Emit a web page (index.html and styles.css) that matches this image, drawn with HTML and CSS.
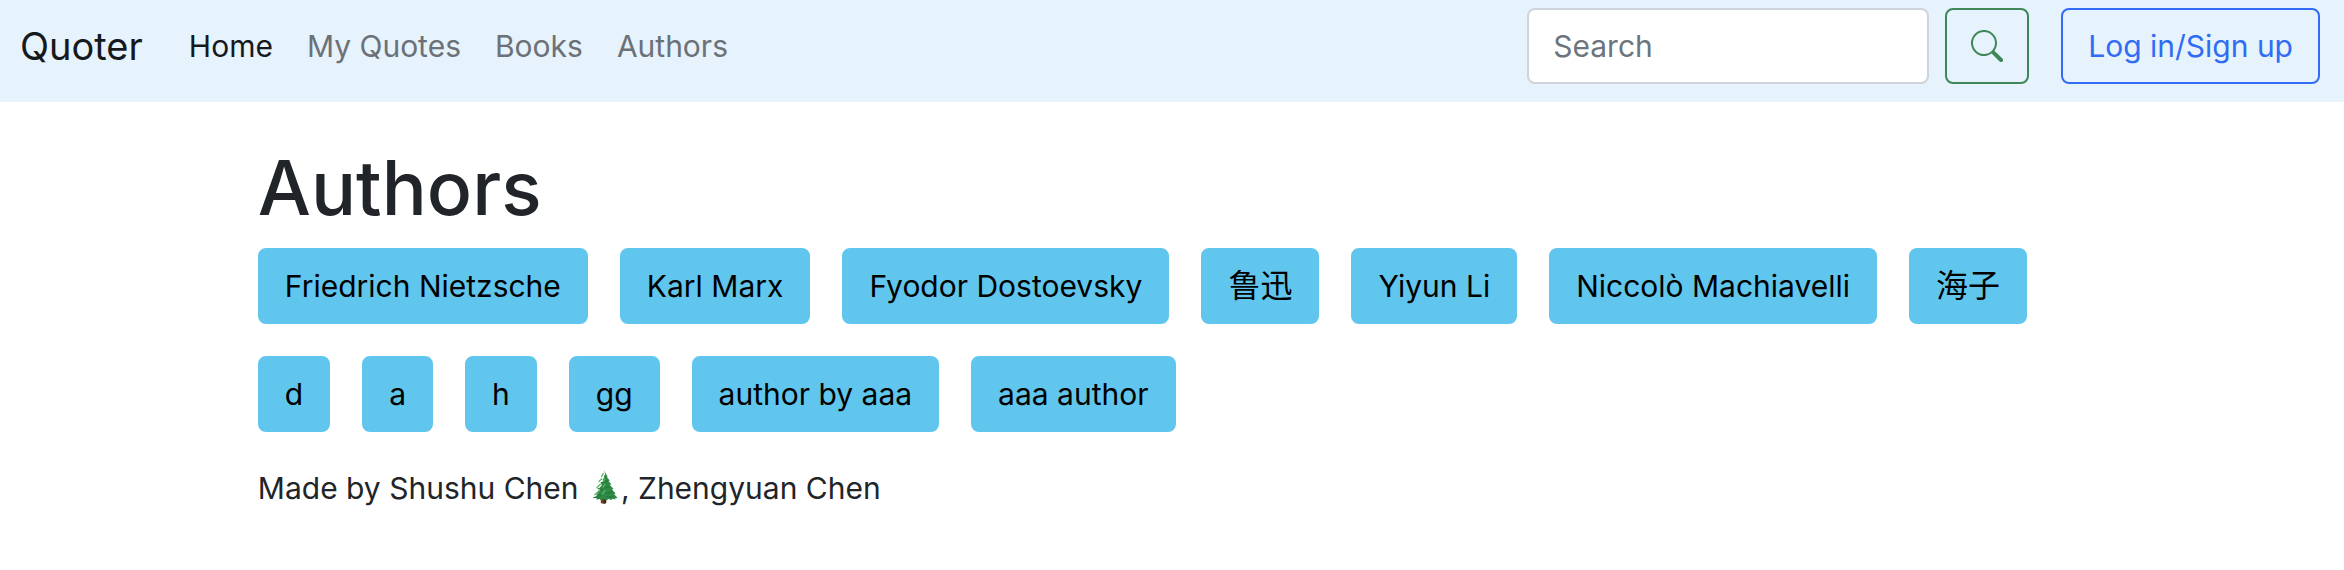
FILE: index.html
```html
<!DOCTYPE html>
<html lang="en">
<head>
<meta charset="utf-8">
<title>Quoter - Authors</title>
<link rel="stylesheet" href="styles.css">
</head>
<body>
<nav class="navbar">
  <a class="brand" href="#">Quoter</a>
  <ul class="nav-links">
    <li><a class="active" href="#">Home</a></li>
    <li><a href="#">My Quotes</a></li>
    <li><a href="#">Books</a></li>
    <li><a href="#">Authors</a></li>
  </ul>
  <form class="search">
    <input class="search-input" type="search" placeholder="Search" aria-label="Search">
    <button class="btn search-btn" type="submit" aria-label="Submit search">
      <svg class="icon" viewBox="0 0 16 16" fill="currentColor" aria-hidden="true"><path d="M11.742 10.344a6.500 6.500 0 1 0-1.397 1.398h-.001c.03.04.062.078.098.115l3.850 3.850a1 1 0 0 0 1.415-1.414l-3.850-3.850a1.007 1.007 0 0 0-.115-.1zM12 6.500a5.500 5.500 0 1 1-11 0 5.500 5.500 0 0 1 11 0z"/></svg>
    </button>
  </form>
  <a class="btn login" href="#">Log in/Sign up</a>
</nav>
<main class="page">
  <h1 class="title">Authors</h1>
  <div class="authors">
    <a class="btn author" href="#">Friedrich Nietzsche</a>
    <a class="btn author" href="#">Karl Marx</a>
    <a class="btn author" href="#">Fyodor Dostoevsky</a>
    <a class="btn author author-zh" href="#" lang="zh">鲁迅</a>
    <a class="btn author" href="#">Yiyun Li</a>
    <a class="btn author" href="#">Niccolò Machiavelli</a>
    <a class="btn author author-zh" href="#" lang="zh">海子</a>
    <a class="btn author" href="#">d</a>
    <a class="btn author" href="#">a</a>
    <a class="btn author" href="#">h</a>
    <a class="btn author" href="#">gg</a>
    <a class="btn author" href="#">author by aaa</a>
    <a class="btn author" href="#">aaa author</a>
  </div>
  <footer class="footer">Made by Shushu Chen <svg class="tree" viewBox="0 0 32 32" role="img" aria-label="evergreen tree"><path fill="#6b3f1d" d="M13 25h5v6q-2.500 1.500-5 0z"/><path fill="#3b210f" d="M16 25h2v6l-2 .8z"/><path fill="#2f8a45" d="M16 0l2 4 1.500 2-1 .3 2.500 3.200-1.200.5 3.200 3.500-1.500.5 3.500 3.800-1.500.6 3.500 3.600-1.500.6 3.500 4-2.500-.2.500 1.400-3-.8-.8 1.300-2.700-1.100-2.500 1.500-2.200-1.500-2.800 1.300-1-1.300-3 .9.400-1.500-2.700-.3 4-4-1.800-.5 3.700-3.700-1.600-.5 3.300-3.800-1.500-.4 2.800-3.500-1.200-.4 2.300-3.200-1-.3 1.500-2z"/><path fill="none" stroke="#56b865" stroke-width="1.200" d="M15.500 3l-2 3.500M14 8l-3 3M17 8l-2 3M13 13l-4 4M17 13l-2 3.500M12 19l-5 4.500M17 19l-3 4.500"/><path fill="none" stroke="#27753c" stroke-width="1" d="M16.500 6l2 1M17 11l4-1M13 11.500l3 .8M17 17l5-1.500M10 17.500l5 1M18 22l6-1.500M9 23l6 1M18 25.500l7-.5M6 26l6-.5"/></svg>, Zhengyuan Chen</footer>
</main>
</body>
</html>
```
FILE: styles.css
```css
* { box-sizing: border-box; }
body {
  margin: 0;
  background: #fff;
  color: #212529;
  font-family: Inter, "Noto Sans CJK SC", sans-serif;
  font-size: 30px;
  line-height: 48px;
}
a { text-decoration: none; color: inherit; }
.navbar {
  display: flex;
  align-items: center;
  padding: 8px 24px 18px 20px;
  background: #e6f2fc;
}
.brand { font-size: 38px; color: #15191c; margin-right: 46px; }
.nav-links {
  display: flex;
  gap: 34px;
  list-style: none;
  margin: 0 auto 0 0;
  padding: 0;
  color: #6b7177;
}
.nav-links .active { color: #15191c; }
.search { display: flex; gap: 16px; margin-right: 32px; }
.search-input {
  width: 402px;
  padding: 12px 24px;
  border: 2px solid #ced4da;
  border-radius: 8px;
  background: #fff;
  font: inherit;
  color: #212529;
}
.search-input::placeholder { color: #6c757d; opacity: 1; }
.btn {
  display: inline-flex;
  align-items: center;
  padding: 12px 25px;
  border: 2px solid;
  border-radius: 8px;
  background: transparent;
  font: inherit;
}
.search-btn { padding: 12px 24px; color: #3f8757; border-color: #3f8757; }
.icon { width: 32px; height: 32px; }
.login { color: #316cf4; border-color: #316cf4; }
.page { padding: 38px 11%; }
.title { margin: 0 0 12px; font-size: 75px; font-weight: 500; line-height: 96px; }
.authors { display: flex; flex-wrap: wrap; gap: 32px; }
.author { background: #61c6ed; border-color: #61c6ed; color: #000; }
.author-zh { font-size: 32px; }
.footer { margin-top: 32px; }
.tree { width: 34px; height: 34px; vertical-align: -5px; }
```
